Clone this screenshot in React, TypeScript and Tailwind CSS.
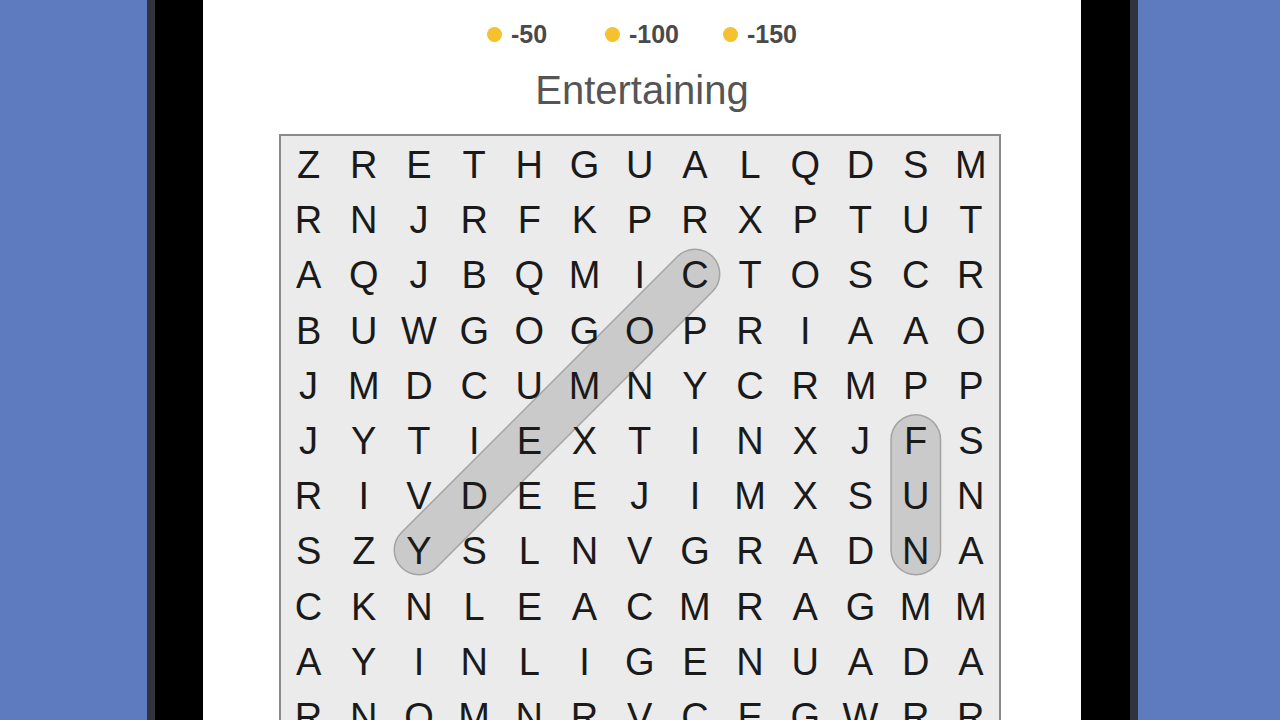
import React from 'react';

const rows = [
  'ZRETHGUALQDSM',
  'RNJRFKPRXPTUT',
  'AQJBQMICTOSCR',
  'BUWGOGOPRIAAO',
  'JMDCUMNYCRMPP',
  'JYTIEXTINXJFS',
  'RIVDEEJIMXSUN',
  'SZYSLNVGRADNA',
  'CKNLEACMRAGMM',
  'AYINLIGENUADA',
  'RNOMNRVCEGWRR',
  'TLAEUOPSNIBHD',
];

const CELL = 55.2;

// found words, in cell coords [col, row]
const found: [number, number, number, number][] = [
  [2, 7, 7, 2], // COMEDY
  [11, 5, 11, 7], // FUN
];

function Coin({ value, wide }: { value: string; wide?: boolean }) {
  return (
    <div className={`flex items-center gap-[9px] ${wide ? 'w-[118px]' : ''}`}>
      <span className="w-[15px] h-[15px] rounded-full bg-[#f5c12e]" />
      <span className="text-[25px] font-bold text-[#4a4a4a] leading-none">{value}</span>
    </div>
  );
}

export default function App() {
  const w = CELL * 13;
  const h = CELL * rows.length;

  return (
    <div
      className="h-[720px] w-full overflow-hidden bg-[#5f7bbf] pl-[147px]"
      style={{ fontFamily: '"Liberation Sans", Arial, sans-serif' }}
    >
      <div className="h-full w-[991px] bg-[#33333d] px-[8px]">
        <div className="h-full bg-black pl-[48px] pr-[49px]">
          <div className="h-full bg-white flex flex-col items-center">
            {/* stats row, mostly scrolled off the top */}
            <div className="h-[10px] w-full overflow-hidden">
              <div className="-mt-[14px] flex justify-center gap-[70px] pl-[10px] text-[26px] leading-none font-bold text-[#666]">
                <span className="w-[45px] text-center">i p</span>
                <span className="w-[55px] text-center">- p</span>
                <span className="w-[70px] text-center">@ 11</span>
              </div>
            </div>

            <div className="mt-[22px] flex items-center">
              <Coin value="-50" wide />
              <Coin value="-100" wide />
              <Coin value="-150" />
            </div>

            <h1 className="mt-[23px] text-[40px] leading-none text-[#555]">Entertaining</h1>

            <div className="mt-[24px] self-start ml-[76px] border-2 border-[#8a8a8a] bg-[#ebebeb]">
              <div className="relative" style={{ width: w, height: h }}>
                <svg className="absolute inset-0" width={w} height={h}>
                  {found.map(([c1, r1, c2, r2], i) => {
                    const x1 = (c1 + 0.5) * CELL;
                    const y1 = (r1 + 0.5) * CELL;
                    const x2 = (c2 + 0.5) * CELL;
                    const y2 = (r2 + 0.5) * CELL;
                    return (
                      <g key={i}>
                        <line x1={x1} y1={y1} x2={x2} y2={y2} stroke="#a3a3a3" strokeWidth={51} strokeLinecap="round" />
                        <line x1={x1} y1={y1} x2={x2} y2={y2} stroke="#cacaca" strokeWidth={48} strokeLinecap="round" />
                      </g>
                    );
                  })}
                </svg>
                <div className="relative grid grid-cols-[repeat(13,55.2px)] auto-rows-[55.2px]">
                  {rows.map((row, r) =>
                    row.split('').map((ch, c) => (
                      <div key={`${r}-${c}`} className="flex items-center justify-center pt-[3px] text-[38px] leading-none text-[#1a1a1a]">
                        {ch}
                      </div>
                    ))
                  )}
                </div>
              </div>
            </div>
          </div>
        </div>
      </div>
    </div>
  );
}
